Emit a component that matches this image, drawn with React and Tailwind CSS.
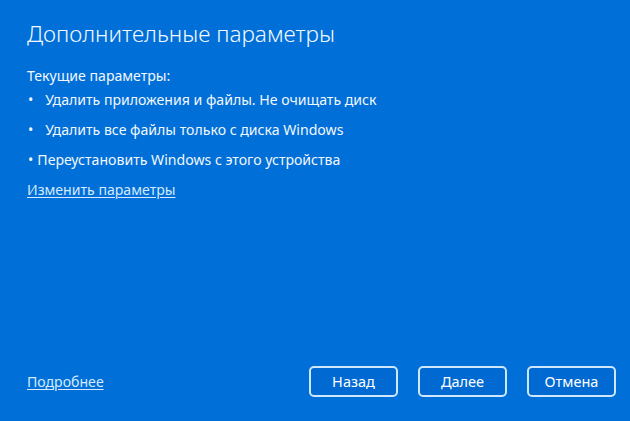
import React from "react";

const items = [
  { text: "Удалить приложения и файлы. Не очищать диск", gap: "pl-[12px]" },
  { text: "Удалить все файлы только с диска Windows", gap: "pl-[12px]" },
  { text: "Переустановить Windows с этого устройства", gap: "pl-[4px]" },
];

function OutlineButton({ children }) {
  return (
    <button className="flex h-[31px] w-[89px] items-center justify-center rounded-[5px] border-2 border-[#cfe6ff] bg-[#0069d2] text-[14.5px] text-white">
      {children}
    </button>
  );
}

export default function App() {
  return (
    <div
      className="flex h-[421px] w-[630px] flex-col bg-[#006fd8] text-white"
      style={{ fontFamily: '"Noto Sans", "Open Sans", sans-serif' }}
    >
      <div className="px-[27px] pt-[18px]">
        <h1 className="text-[22.6px] font-light leading-[32px] text-[#f2f8ff]">
          Дополнительные параметры
        </h1>

        <div className="mt-[16px] text-[14.1px] leading-[30px] text-[#f2f8ff]">
          <div className="leading-[20px]">Текущие параметры:</div>
          <ul className="-mt-[1px]">
            {items.map((it, i) => (
              <li key={i} className="flex">
                <span className="pl-[1px]">•</span>
                <span className={it.gap}>{it.text}</span>
              </li>
            ))}
          </ul>
          <a href="#" className="underline decoration-1 underline-offset-2 text-[#d4eaff]">
            Изменить параметры
          </a>
        </div>
      </div>

      <div className="mt-auto flex items-center pb-[24px] pl-[27px] pr-[14px]">
        <a href="#" className="text-[14.1px] text-[#d4eaff] underline decoration-1 underline-offset-2">
          Подробнее
        </a>
        <div className="ml-auto flex gap-[20px]">
          <OutlineButton>Назад</OutlineButton>
          <OutlineButton>Далее</OutlineButton>
          <OutlineButton>Отмена</OutlineButton>
        </div>
      </div>
    </div>
  );
}
